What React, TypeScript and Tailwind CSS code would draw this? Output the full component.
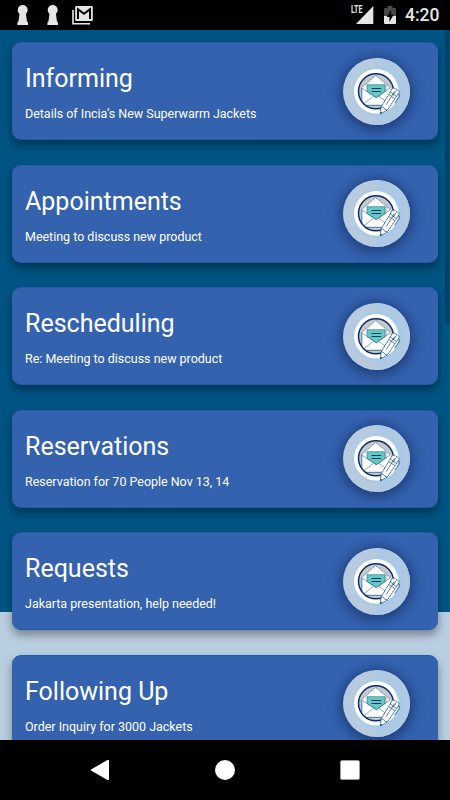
import React from 'react';

interface EmailCategory {
  id: number;
  title: string;
  subject: string;
}

const categories: EmailCategory[] = [
  { id: 1, title: 'Informing', subject: 'Details of Incia’s New Superwarm Jackets' },
  { id: 2, title: 'Appointments', subject: 'Meeting to discuss new product' },
  { id: 3, title: 'Rescheduling', subject: 'Re: Meeting to discuss new product' },
  { id: 4, title: 'Reservations', subject: 'Reservation for 70 People Nov 13, 14' },
  { id: 5, title: 'Requests', subject: 'Jakarta presentation, help needed!' },
  { id: 6, title: 'Following Up', subject: 'Order Inquiry for 3000 Jackets' },
];

// ============================================
// ICONS
// ============================================

const KeyholeIcon: React.FC = () => (
  <svg width="12" height="20" viewBox="0 0 12 20" fill="#e6e6e6">
    <circle cx="5.700" cy="5" r="5" />
    <path d="M2.600 8h6.200l1.200 8.500 1 1V20H.4v-2.500l1-1z" />
  </svg>
);

const GmailIcon: React.FC = () => (
  <svg width="21" height="19" viewBox="0 0 21 19">
    <path d="M1 4v13.8h17" fill="none" stroke="#e6e6e6" strokeWidth="1.6" />
    <rect x="3.2" y="0" width="17.6" height="15" rx="1.2" fill="#e6e6e6" />
    <path d="M6 13V3.200l6 4.600 6-4.600V13" fill="none" stroke="#000" strokeWidth="2" />
  </svg>
);

const SignalIcon: React.FC = () => (
  <svg width="18" height="18" viewBox="0 0 18 18" className="absolute top-[6px] left-[5px]">
    <path d="M17.300 0v18H0z" fill="#e6e6e6" />
  </svg>
);

const BatteryIcon: React.FC = () => (
  <svg width="12" height="18" viewBox="0 0 12 18">
    <path d="M3.500 0h5v2H11a1 1 0 0 1 1 1v8H0V3a1 1 0 0 1 1-1h2.500z" fill="#484848" />
    <path d="M0 10h12v7a1 1 0 0 1-1 1H1a1 1 0 0 1-1-1z" fill="#e6e6e6" />
    <path d="M7.200 4L2.700 11h2.700v5L9.600 8.800H7.200z" fill="#000" />
  </svg>
);

const EnvelopeBadge: React.FC = () => (
  <div className="size-[67px] shrink-0 rounded-full shadow-[0_2px_12px_3px_rgba(10,25,70,0.5)]">
    <svg width="67" height="67" viewBox="0 0 67 67">
      <defs>
        <clipPath id="badge-ring">
          <circle cx="33" cy="33.300" r="17.500" />
        </clipPath>
      </defs>
      <circle cx="33.500" cy="33.500" r="33.500" fill="#b6cbe0" />
      <path d="M33.500 0a33.500 33.500 0 0 1 0 67z" fill="#adc9e3" />
      <circle cx="34.500" cy="33.500" r="24.500" fill="#a8cae5" />
      <circle cx="33.300" cy="33.300" r="22.300" fill="#fff" />
      <path d="M50.500 20a22 22 0 0 1 3 22l-8 11 8-11 2-12z" fill="#acd0e9" />
      <circle cx="33" cy="33.300" r="17.500" fill="#c6c9cc" />
      {/* envelope */}
      <g clipPath="url(#badge-ring)">
        <path d="M18.500 29.700L32.700 17.500 47.500 29.700V47H18.500z" fill="#fff" />
        <path d="M18.500 29.700L32.700 17.500 47.500 29.700" fill="none" stroke="#286e94" strokeWidth=".7" strokeDasharray="1.500 .6" />
        <path d="M18.800 29.700v17.600" stroke="#286e94" strokeWidth=".9" />
        <path d="M42 26.700l2-.2v5.700l-2 1.500z" fill="#dfe6ea" stroke="#8a9aa8" strokeWidth=".4" />
        <path d="M24 26.700h18v7l-8.700 6-9.300-6.200z" fill="#65c9c2" stroke="#236e83" strokeWidth=".6" />
        <path d="M19 30l14.300 9.700L47.300 29.700M19.200 47l11.200-8.700M46 46l-10-7.700" fill="none" stroke="#3e7792" strokeWidth=".6" />
        <path d="M28.500 30.500h9.700M28.500 33.500h9.700" stroke="#0c3a78" strokeWidth="1.200" />
        <path d="M19 47.300h26" stroke="#1d6588" strokeWidth=".8" />
      </g>
      <circle cx="33" cy="33.300" r="17.500" fill="none" stroke="#0c2d6b" strokeWidth="1.500" />
      {/* pen */}
      <path d="M37.300 56l.9-7.200L48.600 31.700c1-1.800 2.200-2 3.300-1.200l3.200 1.800c1.200.8 1.100 2 .2 3.400L44.500 52z" fill="#fff" stroke="#174c80" strokeWidth=".8" strokeDasharray="2.500 .4" />
      <path d="M38.200 48.800l2.300.5 1.200 2 2.800.7M46 36.600l5.700 4M47.500 34.200l5.500 4M51.500 33.500L43.200 46.700M53.300 32.500L50 37.500M56 35.500l.4 3-4.700 6.700" fill="none" stroke="#174c80" strokeWidth=".7" />
      <path d="M37.300 56l.3-2.400 1.800 1.200z" fill="#174c80" />
    </svg>
  </div>
);

// ============================================
// SYSTEM BARS
// ============================================

const StatusBar: React.FC = () => (
  <header className="flex h-[30px] shrink-0 items-start bg-black pr-[10px] pl-[17px]">
    <div className="flex pt-[5px]">
      <KeyholeIcon />
      <div className="ml-[18px]">
        <KeyholeIcon />
      </div>
      <div className="ml-[13px] pt-px">
        <GmailIcon />
      </div>
    </div>
    <div className="ml-auto flex">
      <div className="relative h-[30px] w-[23px]">
        <SignalIcon />
        <span className="absolute top-[5px] left-0 origin-left scale-x-[0.72] text-[10px] leading-[9px] font-bold text-[#e6e6e6]">
          LTE
        </span>
      </div>
      <div className="ml-[10px] pt-[6px]">
        <BatteryIcon />
      </div>
      <span className="ml-[9px] w-[35px] text-[17.5px] leading-[31px] font-medium whitespace-nowrap text-[#e6e6e6]">
        4:20
      </span>
    </div>
  </header>
);

const NavigationBar: React.FC = () => (
  <nav className="flex h-[60px] shrink-0 items-center justify-between bg-black px-[90px]">
    <svg width="20" height="20" viewBox="0 0 20 20" fill="#fff">
      <path d="M17.500 0a1 1 0 0 1 1.500 1v18a1 1 0 0 1-1.500 1L1.400 10.800a1 1 0 0 1 0-1.600z" />
    </svg>
    <div className="size-5 rounded-full bg-white" />
    <div className="size-5 rounded-[2px] border border-[#999] bg-white" />
  </nav>
);

// ============================================
// CATEGORY LIST
// ============================================

const CategoryCard: React.FC<{ category: EmailCategory }> = ({ category }) => (
  <div className="flex h-[98px] shrink-0 items-center justify-between rounded-[9px] border-y border-[#1f5cac] bg-[#3462af] pr-[28px] pl-[13px] shadow-[0_5px_9px_rgba(0,0,0,0.36)]">
    <div className="flex flex-col pt-[4px] text-white">
      <h2 className="text-[25px] leading-[30px]">{category.title}</h2>
      <p className="mt-[12px] text-[12.480px] leading-[16px]">{category.subject}</p>
    </div>
    <EnvelopeBadge />
  </div>
);

export default function App() {
  return (
    <div className="flex h-[800px] w-[450px] flex-col overflow-hidden bg-black font-[Roboto,sans-serif]">
      <StatusBar />
      <main className="relative min-h-0 flex-1 overflow-hidden bg-[linear-gradient(#005483_0_582px,#b9cee1_582px)]">
        <div className="flex flex-col gap-[24.5px] px-[12px] pt-[12px]">
          {categories.map((category) => (
            <CategoryCard key={category.id} category={category} />
          ))}
        </div>
        {/* scroll indicator */}
        <div className="absolute top-0 right-0 h-[294px] w-[5px] bg-[#00426b]" />
      </main>
      <NavigationBar />
    </div>
  );
}
